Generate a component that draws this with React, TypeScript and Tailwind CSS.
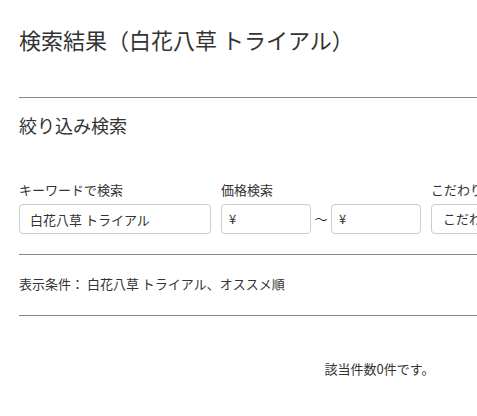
import React from "react";

export default function App() {
  return (
    <div
      className="w-[477px] h-[416px] overflow-hidden bg-white text-[#333]"
      style={{ fontFamily: '"Noto Sans CJK JP", "Noto Sans", sans-serif' }}
    >
      <div className="w-[740px] pl-[19px]">
        <h1 className="mt-[23px] text-[22px] leading-[32px] font-normal">
          検索結果（白花八草 トライアル）
        </h1>
        <div className="mt-[42px] border-t border-[#888]" />
        <h2 className="mt-[14px] text-[18px] leading-[26px] font-normal">絞り込み検索</h2>

        <div className="mt-[42px] flex gap-[10px] text-[13px]">
          <div className="flex flex-col w-[192px]">
            <label className="leading-[19px]">キーワードで検索</label>
            <div className="mt-[5px] h-[30px] rounded-[4px] border border-[#ccc] px-[10px] flex items-center leading-none">
              白花八草 トライアル
            </div>
          </div>
          <div className="flex flex-col">
            <label className="leading-[19px]">価格検索</label>
            <div className="mt-[5px] flex items-center">
              <div className="w-[90px] h-[30px] rounded-[4px] border border-[#ccc] px-[7px] flex items-center">
                ¥
              </div>
              <span className="w-[20px] text-center">～</span>
              <div className="w-[90px] h-[30px] rounded-[4px] border border-[#ccc] px-[7px] flex items-center">
                ¥
              </div>
            </div>
          </div>
          <div className="flex flex-col w-[200px]">
            <label className="leading-[19px] whitespace-nowrap">こだわり条件</label>
            <div className="mt-[5px] h-[30px] rounded-[4px] border border-[#ccc] px-[11px] flex items-center whitespace-nowrap">
              こだわり条件を選択
            </div>
          </div>
        </div>

        <div className="mt-[20px] border-t border-[#888]" />
        <p className="mt-[19px] text-[13px] leading-[19px]">表示条件： 白花八草 トライアル、オススメ順</p>
        <div className="mt-[22px] border-t border-[#888]" />
        <p className="mt-[43px] text-[13px] leading-[19px] text-center">該当件数0件です。</p>
      </div>
    </div>
  );
}
